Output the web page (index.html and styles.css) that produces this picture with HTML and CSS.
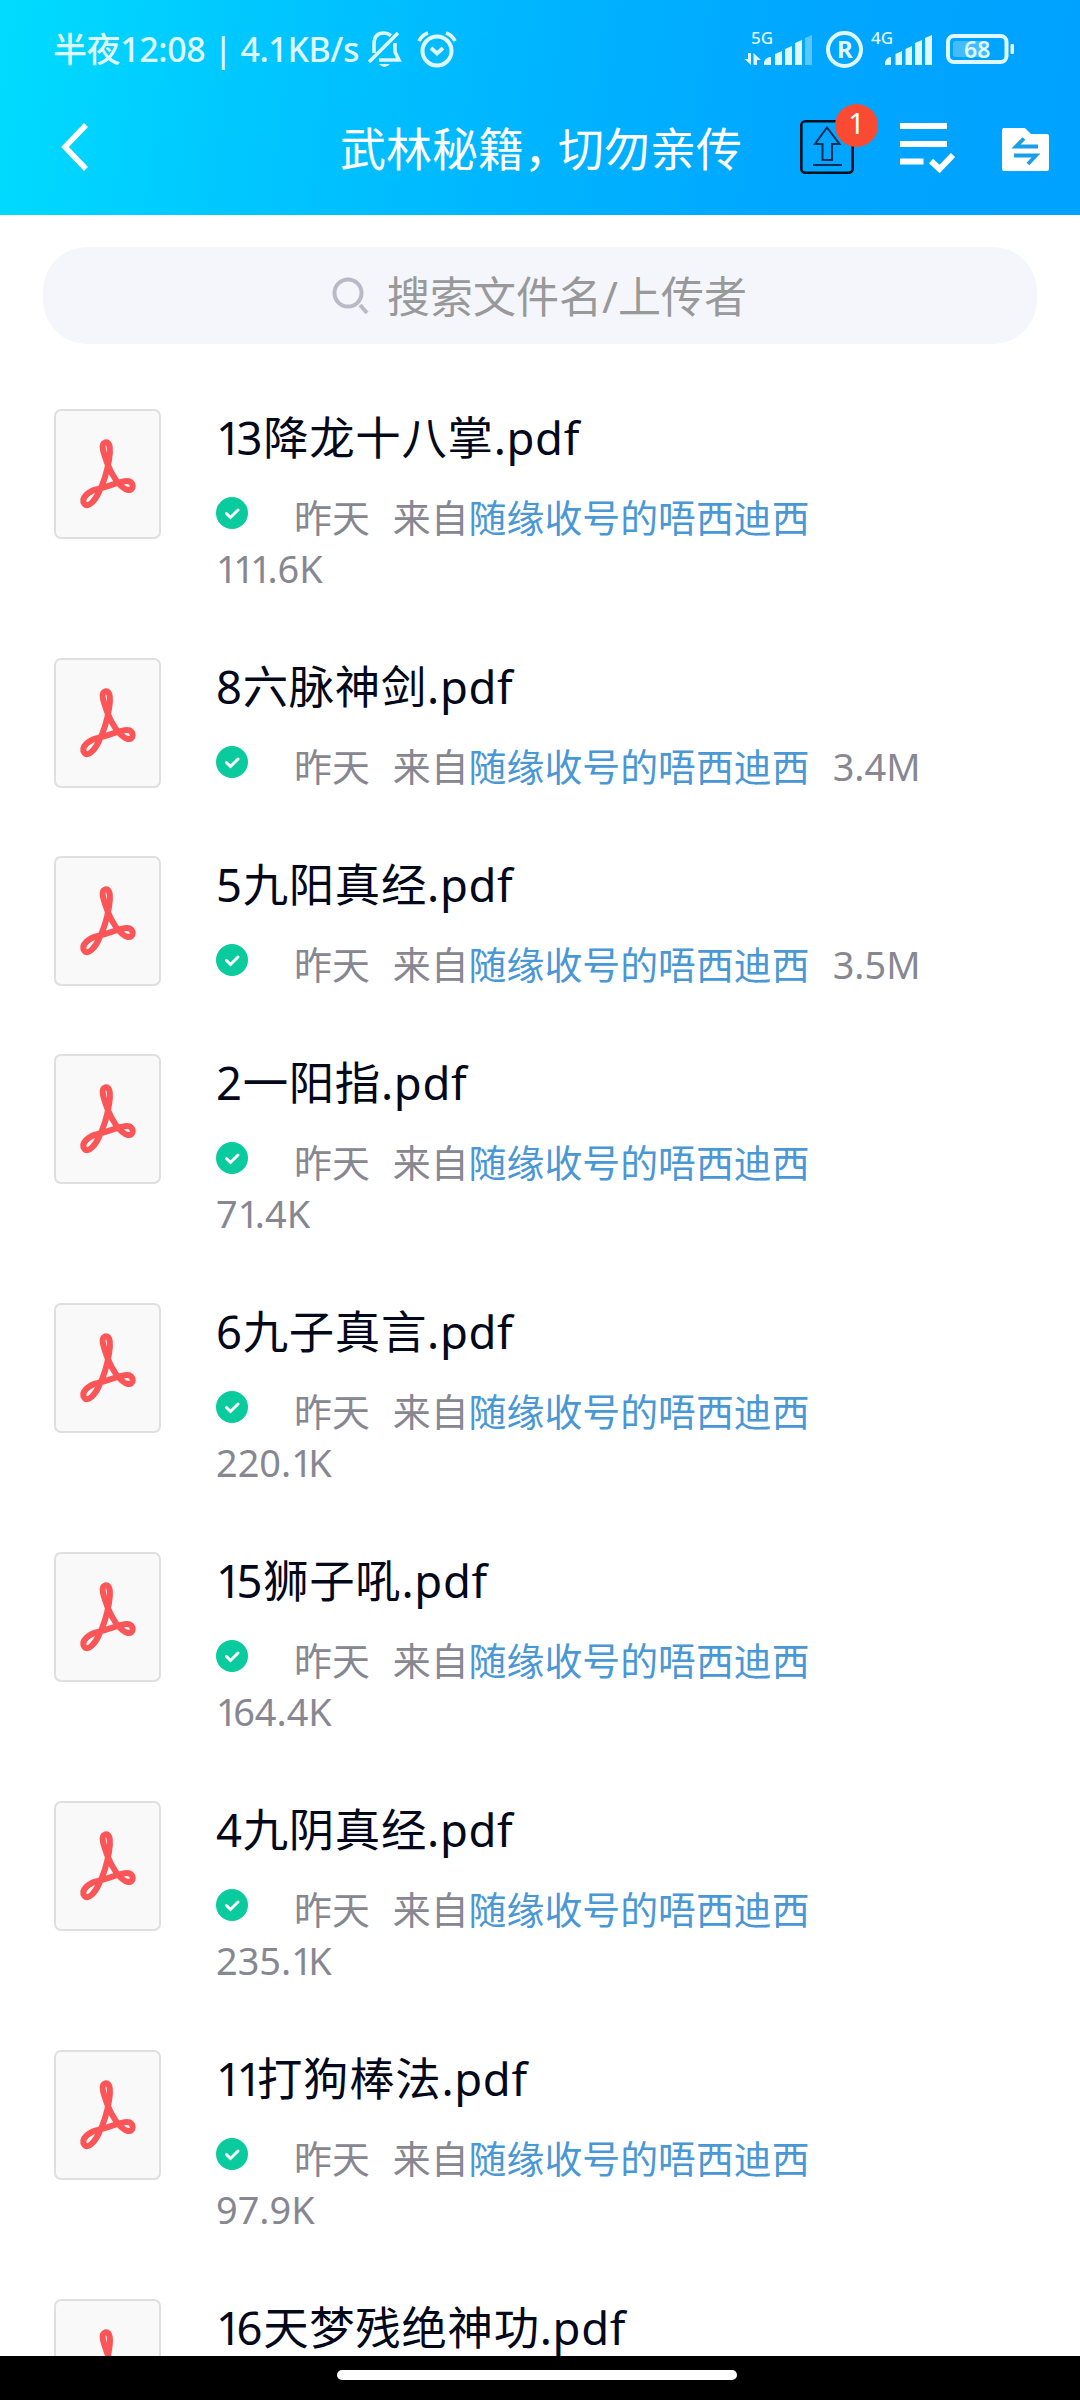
FILE: index.html
```html
<!DOCTYPE html>
<html lang="zh-CN">
<head>
  <meta charset="UTF-8">
  <meta name="viewport" content="width=device-width, initial-scale=1.0">
  <title>武林秘籍，切勿亲传</title>
  <link rel="stylesheet" href="styles.css">
</head>
<body>
  <svg class="defs" width="0" height="0">
    <symbol id="pdf" viewBox="0 0 103 126">
      <path d="M51.500 53 C48 43 44 33 49 31.500 C55 30 54.500 41 53 49 C51 61 47 73 43 81 C39 90 32 97 28.500 93 C24 87 33 80 42 78 C53 75 66 70 71 70 C79 70 78 80 72 79 C63 77 55 62 51.500 53 Z" />
    </symbol>
    <symbol id="done" viewBox="0 0 32 32">
      <circle cx="16" cy="16" r="16" fill="#0acb9d" />
      <path d="M10.500 16.500 L14.500 20.500 L22 13" fill="none" stroke="#fff" stroke-width="3" stroke-linecap="round" />
    </symbol>
  </svg>

  <header>
    <div class="status">
      <span class="clock">半夜12:08 | 4.1KB/s</span>
      <svg class="bell" width="36" height="40" viewBox="0 0 36 40" fill="none" stroke="#dff8ff" stroke-width="3.500">
        <path d="M7 24 V15 C7 7 11 4 17 4 C20 4 22 5 24 6.500 M28 14 V23 L32 31 H12 M2 33 L31 4" />
        <path d="M12 35 H23 Q17.500 41 12 35 Z" fill="#dff8ff" stroke="none" />
      </svg>
      <svg class="alarm" width="40" height="40" viewBox="0 0 40 40" fill="none" stroke="#dff8ff" stroke-width="4">
        <circle cx="20" cy="22" r="14.500" />
        <path d="M2 12 Q5 6 11 4 M38 12 Q35 6 29 4 M14 19 L20 24.500 L26 19" stroke-width="3.800" />
      </svg>
      <svg class="signals" width="290" height="60" viewBox="740 20 290 60" fill="#dff8ff">
        <text x="751" y="44" class="net">5G</text>
        <path d="M748 53 H751 V65 L744.500 59 H748 Z M753.500 65 V53 L761 60 H757 V65 Z" />
        <path d="M764 65 V62 Q766 57 771 57 V65 Z M775 65 V54 L782 51 V65 Z M785 65 V49 L792 46 V65 Z M795 65 V43 L802 40 V65 Z" />
        <path d="M805 65 V38 L812 35 V65 Z" opacity=".4" />
        <circle cx="844.500" cy="49.500" r="16.500" fill="none" stroke="#dff8ff" stroke-width="4" />
        <text x="837" y="58" class="roam">R</text>
        <text x="871" y="44" class="net">4G</text>
        <path d="M885 65 V62 Q887 57 891 57 V65 Z M895.500 65 V54 L902 51 V65 Z M905.500 65 V49 L912 46 V65 Z M915 65 V43 L922 40 V65 Z M925 65 V38 L932 35 V65 Z" />
        <rect x="948" y="36" width="58.500" height="26" rx="6" fill="none" stroke="#dff8ff" stroke-width="4" />
        <rect x="953" y="41" width="33" height="16" rx="2" opacity=".3" />
        <rect x="1010.500" y="44" width="3.500" height="10" rx="1" />
        <text x="964" y="58" class="level">68</text>
      </svg>
    </div>
    <div class="bar">
      <svg class="back" width="30" height="50" viewBox="0 0 30 50" fill="none" stroke="#fff" stroke-width="5.500">
        <path d="M26 3 L5 25 L26 47" />
      </svg>
      <h1>武林秘籍<span class="comma">，</span>切勿亲传</h1>
      <div class="upload">
        <svg width="54" height="54" viewBox="0 0 54 54" fill="none">
          <rect x="1.300" y="1.300" width="51.400" height="51.400" rx="4" stroke="#04101c" stroke-width="2.600" />
          <path d="M27 7.500 L39.500 24 H32 V40 H22.500 V24 H15 Z M13 45 H42" stroke="#052c52" stroke-width="2" />
        </svg>
        <span class="badge">1</span>
      </div>
      <svg class="select" width="56" height="54" viewBox="0 0 56 54" stroke="#fff" stroke-width="6" fill="none">
        <path d="M0 6 H47 M0 24 H47 M0 41.500 H23.500 M31 41 L39.500 49 L53 35" />
      </svg>
      <svg class="folder" width="47" height="44" viewBox="0 0 47 44">
        <path d="M2 0 H23 L29 6 H45 Q47 6 47 8 V41 Q47 43 45 43 H2 Q0 43 0 41 V2 Q0 0 2 0 Z" fill="#fff" />
        <path d="M36 18.500 H14 L22 10.500 M12 27.500 H34 L26 36" fill="none" stroke="#1a9eea" stroke-width="3.800" />
      </svg>
    </div>
  </header>

  <main>
    <div class="search">
      <svg width="38" height="38" viewBox="0 0 38 38" fill="none" stroke="#b9bac8" stroke-width="4">
        <circle cx="16" cy="16" r="13.500" />
        <path d="M28 28 L35 36" />
      </svg>
      <span>搜索文件名/上传者</span>
    </div>

    <ul class="files">
      <li>
        <svg class="icon"><use href="#pdf" /></svg>
        <div class="info">
          <h2><i>1</i>3降龙十八掌.pdf</h2>
          <p><svg class="done"><use href="#done" /></svg><span>昨天</span><span>来自<a>随缘收号的唔西迪西</a></span><span class="size"><i>111</i>.6K</span></p>
        </div>
      </li>
      <li>
        <svg class="icon"><use href="#pdf" /></svg>
        <div class="info">
          <h2>8六脉神剑.pdf</h2>
          <p><svg class="done"><use href="#done" /></svg><span>昨天</span><span>来自<a>随缘收号的唔西迪西</a></span><span class="size">3.4M</span></p>
        </div>
      </li>
      <li>
        <svg class="icon"><use href="#pdf" /></svg>
        <div class="info">
          <h2>5九阳真经.pdf</h2>
          <p><svg class="done"><use href="#done" /></svg><span>昨天</span><span>来自<a>随缘收号的唔西迪西</a></span><span class="size">3.5M</span></p>
        </div>
      </li>
      <li>
        <svg class="icon"><use href="#pdf" /></svg>
        <div class="info">
          <h2>2一阳指.pdf</h2>
          <p><svg class="done"><use href="#done" /></svg><span>昨天</span><span>来自<a>随缘收号的唔西迪西</a></span><span class="size">7<i>1</i>.4K</span></p>
        </div>
      </li>
      <li>
        <svg class="icon"><use href="#pdf" /></svg>
        <div class="info">
          <h2>6九子真言.pdf</h2>
          <p><svg class="done"><use href="#done" /></svg><span>昨天</span><span>来自<a>随缘收号的唔西迪西</a></span><span class="size">220.<i>1</i>K</span></p>
        </div>
      </li>
      <li>
        <svg class="icon"><use href="#pdf" /></svg>
        <div class="info">
          <h2><i>1</i>5狮子吼.pdf</h2>
          <p><svg class="done"><use href="#done" /></svg><span>昨天</span><span>来自<a>随缘收号的唔西迪西</a></span><span class="size"><i>1</i>64.4K</span></p>
        </div>
      </li>
      <li>
        <svg class="icon"><use href="#pdf" /></svg>
        <div class="info">
          <h2>4九阴真经.pdf</h2>
          <p><svg class="done"><use href="#done" /></svg><span>昨天</span><span>来自<a>随缘收号的唔西迪西</a></span><span class="size">235.<i>1</i>K</span></p>
        </div>
      </li>
      <li>
        <svg class="icon"><use href="#pdf" /></svg>
        <div class="info">
          <h2><i>11</i>打狗棒法.pdf</h2>
          <p><svg class="done"><use href="#done" /></svg><span>昨天</span><span>来自<a>随缘收号的唔西迪西</a></span><span class="size">97.9K</span></p>
        </div>
      </li>
      <li>
        <svg class="icon"><use href="#pdf" /></svg>
        <div class="info">
          <h2><i>1</i>6天梦残绝神功.pdf</h2>
        </div>
      </li>
    </ul>
  </main>

  <footer><div class="home"></div></footer>
</body>
</html>
```
FILE: styles.css
```css
* {
  box-sizing: border-box;
}

body {
  margin: 0;
  width: 1080px;
  height: 2400px;
  overflow: hidden;
  display: flex;
  flex-direction: column;
  background: #fff;
  font-family: "Noto Sans", "Noto Sans CJK SC", sans-serif;
}

svg {
  flex: none;
  display: block;
}

.defs {
  position: absolute;
}

header {
  flex: none;
  height: 215px;
  background: linear-gradient(98deg, #00dcff 0%, #00c8ff 22%, #00b4ff 50%, #00a6ff 75%, #00a2ff 100%);
  color: #fff;
}

.status {
  display: flex;
  height: 100px;
  padding: 20px 50px 0 53px;
  color: #dff8ff;
}

.clock {
  width: 314px;
  white-space: nowrap;
  font-size: 34px;
  line-height: 59px;
  font-weight: 500;
  letter-spacing: -0.4px;
}

.bell {
  margin-top: 9px;
}

.alarm {
  margin: 9px 0 0 14px;
}

.signals {
  margin-left: auto;
}

.net {
  font-size: 17px;
  font-weight: 500;
}

.roam {
  font-size: 24px;
  font-weight: 700;
}

.level {
  font-size: 23px;
  font-weight: 600;
}

.bar {
  display: flex;
  align-items: center;
  height: 94px;
  padding-left: 60px;
}

.back {
  margin-right: 250px;
}

h1 {
  margin: 0;
  width: 460px;
  font-size: 46px;
  font-weight: 400;
  line-height: 66px;
  padding-top: 2px;
  white-space: nowrap;
}

.comma {
  margin-right: -12px;
}

.upload {
  position: relative;
}

.badge {
  position: absolute;
  left: 35px;
  top: -16px;
  width: 43px;
  height: 43px;
  border-radius: 50%;
  background: #fa4b32;
  font-size: 29px;
  line-height: 37px;
  text-align: center;
}

.select {
  margin-left: 46px;
}

.folder {
  margin: 6px 0 0 46px;
}

main {
  flex: 1;
  min-height: 0;
  overflow: hidden;
}

.search {
  display: flex;
  align-items: center;
  height: 97px;
  margin: 32px 43px 0;
  padding-left: 289px;
  border-radius: 44px;
  background: #f4f6fb;
  color: #999;
  font-size: 43px;
}

.search span {
  margin: -2px 0 0 17px;
}

.files {
  list-style: none;
  margin: 65px 0 0;
  padding: 0;
}

.files li {
  display: flex;
  padding: 0 54px 0 54px;
}

.icon {
  width: 107px;
  height: 130px;
  margin-right: 55px;
  border: 2px solid #dfdfe1;
  border-radius: 7px;
  background: #f9f9f9;
  fill: none;
  stroke: #fb5558;
  stroke-width: 6;
}

.info {
  width: 710px;
  padding-bottom: 64px;
}

h2 {
  margin: -2px 0 0;
  font-size: 45.4px;
  font-weight: 400;
  line-height: 60px;
  letter-spacing: 0.7px;
  color: #03081a;
  white-space: nowrap;
}

/* the digit 1 is narrow */
i {
  font-style: normal;
  letter-spacing: -0.12em;
}

p {
  display: flex;
  flex-wrap: wrap;
  margin: 25px 0 0;
  font-size: 37.9px;
  line-height: 51px;
  color: #878792;
  white-space: nowrap;
}

p span {
  margin-right: 23px;
}

p .size {
  margin-right: 0;
}

p a {
  color: #4a97d6;
}

.done {
  width: 32px;
  height: 32px;
  margin: 5px 46px 0 0;
}

footer {
  flex: none;
  height: 44px;
  padding-top: 14px;
  background: #000;
}

.home {
  width: 400px;
  height: 10px;
  margin-left: 337px;
  border-radius: 5px;
  background: #fff;
}
```
